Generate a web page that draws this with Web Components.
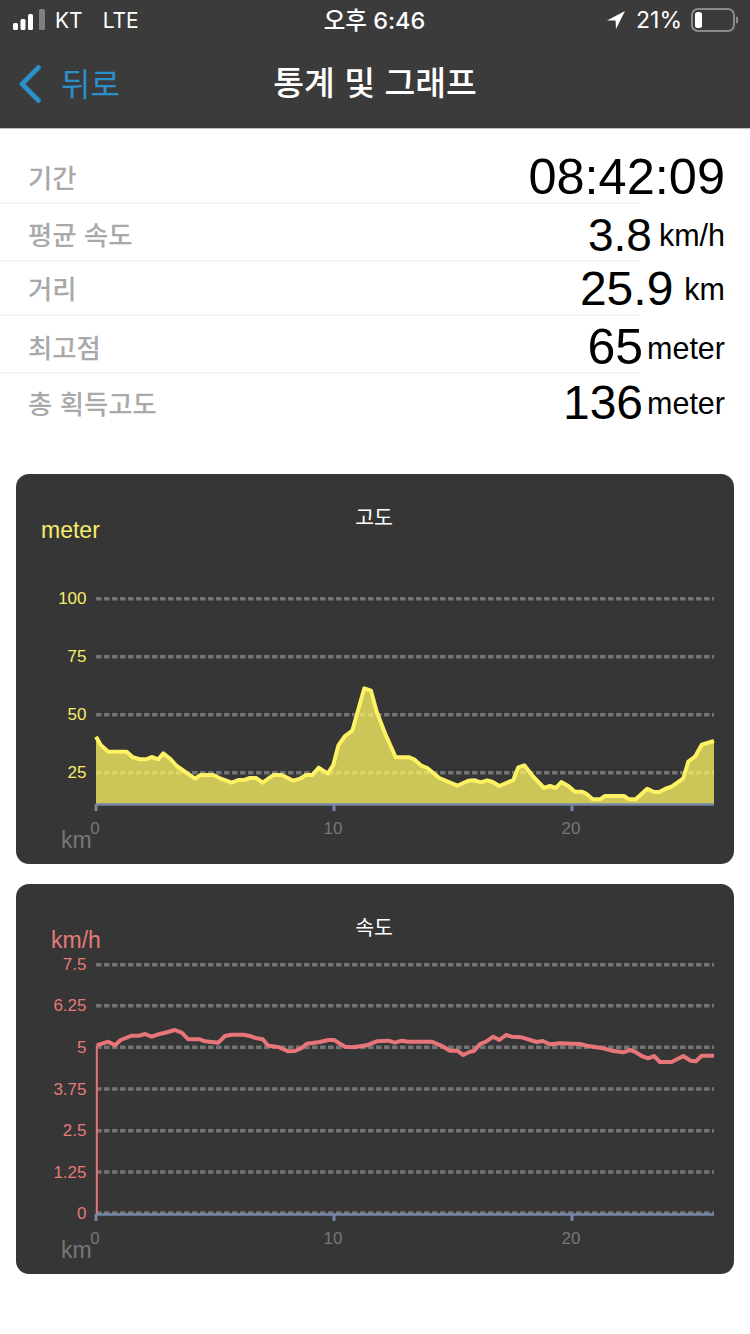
<!DOCTYPE html>
<html lang="ko">
<head>
<meta charset="utf-8">
<title>통계 및 그래프</title>
<style>
  html, body { margin: 0; background: #fff; }
  body { font-family: "Liberation Sans", "Noto Sans CJK KR", sans-serif; }
</style>
</head>
<body>
<status-bar></status-bar>
<nav-bar back="뒤로">통계 및 그래프</nav-bar>
<stat-list>
  <stat-row style="--l:2px;--v:3px;--size:50.5px"><span slot="label">기간</span>08:42:09</stat-row>
  <stat-row style="--l:1px;--v:3px;--gap:7px;--size:46px"><span slot="label">평균 속도</span>3.8<span slot="unit">km/h</span></stat-row>
  <stat-row style="--h:54px;--l:-1px;--v:1px;--gap:11px"><span slot="label">거리</span>25.9<span slot="unit">km</span></stat-row>
  <stat-row style="--l:2px;--v:3px;--gap:4px;--size:50px"><span slot="label">최고점</span>65<span slot="unit">meter</span></stat-row>
  <stat-row last style="--l:0px;--v:1px;--gap:4px"><span slot="label">총 획득고도</span>136<span slot="unit">meter</span></stat-row>
</stat-list>
<chart-card heading="고도" kind="altitude"></chart-card>
<chart-card heading="속도" kind="speed"></chart-card>

<script>
class StatusBar extends HTMLElement {
  constructor() {
    super();
    this.attachShadow({ mode: 'open' });
  }
  connectedCallback() {
    this.shadowRoot.innerHTML = `
    <style>
      :host { display: grid; grid-template-columns: 1fr auto 1fr; align-items: center; height: 40px; padding: 0 12px 0 13px; background: #3b3b3b; color: #fff; font: 400 21px Inter, "Noto Sans CJK KR", sans-serif; }
      .left, .right { display: flex; align-items: center; }
      .right { justify-content: flex-end; }
      .bars { margin-right: 9px; }
      .lte { margin-left: 20px; }
      .time { font-weight: 500; font-size: 23.5px; margin: 0 2px 2px 0; }
      .pct { margin: 0 9px 0 11px; font-size: 23px; }
    </style>
    <div class="left">
      <svg class="bars" width="33" height="22" viewBox="0 0 33 22">
        <rect x="0" y="14" width="5" height="7" rx="1.5" fill="#fff"/>
        <rect x="7.5" y="10" width="5" height="11" rx="1.5" fill="#fff"/>
        <rect x="15" y="5" width="5" height="16" rx="1.5" fill="#fff"/>
        <rect x="26" y="0" width="6" height="21" rx="1.5" fill="#808080"/>
      </svg>
      <span>KT</span><span class="lte">LTE</span>
    </div>
    <div class="time">오후 6:46</div>
    <div class="right">
      <svg width="18" height="18" viewBox="0 0 18 18"><path d="M18 0 L0 9.5 L8.6 9.6 L9 18 Z" fill="#fff"/></svg>
      <span class="pct">21%</span>
      <svg width="47" height="24" viewBox="0 0 47 24">
        <rect x="1" y="1" width="42" height="22" rx="6" fill="none" stroke="#8a8a8a" stroke-width="2"/>
        <rect x="4" y="4" width="7" height="16" rx="2.5" fill="#fff"/>
        <path d="M45 8.5 a3 3.5 0 0 1 0 7 Z" fill="#8a8a8a"/>
      </svg>
    </div>`;
  }
}
customElements.define('status-bar', StatusBar);

class NavBar extends HTMLElement {
  constructor() {
    super();
    this.attachShadow({ mode: 'open' });
  }
  connectedCallback() {
    this.shadowRoot.innerHTML = `
    <style>
      :host { display: grid; grid-template-columns: 1fr auto 1fr; align-items: center; height: 87px; padding: 0 19px 1px; background: #3b3b3b; border-bottom: 1px solid #bdbdbd; font-family: "Noto Sans CJK KR", sans-serif; }
      .back { display: flex; align-items: center; gap: 20px; color: #2b8fcb; font-size: 32px; line-height: 40px; }
      .back span { margin-bottom: 3px; }
      .title { color: #fff; font-size: 33.5px; font-weight: 500; line-height: 40px; margin-bottom: 6px; }
    </style>
    <div class="back">
      <svg width="22" height="38" viewBox="0 0 22 38"><path d="M19.5 2.5 L3 19 L19.5 35.5" fill="none" stroke="#2b8fcb" stroke-width="4.6" stroke-linecap="round" stroke-linejoin="round"/></svg>
      <span>${this.getAttribute('back')}</span>
    </div>
    <div class="title"><slot></slot></div>
    <div></div>`;
  }
}
customElements.define('nav-bar', NavBar);

class StatList extends HTMLElement {
  constructor() {
    super();
    this.attachShadow({ mode: 'open' });
    this.shadowRoot.innerHTML = `
    <style>
      :host { display: block; padding: 16px 0 43px; }
    </style>
    <slot></slot>`;
  }
}
customElements.define('stat-list', StatList);

class StatRow extends HTMLElement {
  constructor() {
    super();
    this.attachShadow({ mode: 'open' });
    this.shadowRoot.innerHTML = `
    <style>
      :host { display: block; }
      .row { display: flex; align-items: center; justify-content: space-between; height: var(--h, 58px); padding: 0 25px 0 28px; box-sizing: border-box; }
      .label { color: #a9a9a9; font: 500 26.4px "Noto Sans CJK KR", sans-serif; margin-top: calc(var(--l, 0px) * 2); }
      .value { display: block; white-space: nowrap; color: #000; font: 400 var(--size, 48px)/1 "Liberation Sans", sans-serif; margin-top: calc(var(--v, 0px) * 2); }
      .unit { font-size: 30.5px; margin-left: var(--gap, 0); vertical-align: 5px; }
      .sep { width: 640px; height: 2px; margin: -1px 0 -1px; background: #f5f5f5; }
      :host([last]) .sep { display: none; }
    </style>
    <div class="row">
      <span class="label"><slot name="label"></slot></span>
      <span class="value"><span><slot></slot></span><span class="unit"><slot name="unit"></slot></span></span>
    </div>
    <div class="sep"></div>`;
  }
}
customElements.define('stat-row', StatRow);

// points are [page x, page y] read off the reference
const ALT_POINTS = [[96,736.7],[100.7,745],[108.3,751.7],[126.7,751.7],[132.7,757.3],[140,759.3],[146,759.3],[151.7,757],[158.3,759.3],[163.3,753.3],[170,758.7],[176.7,766],[195,778.7],[200.7,775],[213.3,775],[220,778.3],[231.7,782.7],[238.3,780],[245,779.7],[250,778],[256,778],[262.7,782.7],[273.3,775],[281.7,775],[293.3,780.7],[300,778.7],[306,775],[312.3,775],[318.7,767.7],[327.7,773.7],[333.3,765],[338.3,745.7],[345,736],[352.3,730.7],[364.3,688.3],[371,690.7],[376.7,711.7],[385,733.3],[395.7,757.3],[409.3,757.3],[414,759.3],[420.7,765.3],[427.3,768],[439.3,778],[457.3,785.7],[468.3,780.7],[475,780.3],[480.7,782.3],[487.3,780.3],[492.7,782],[499.3,786],[513.3,780],[518.3,767.3],[524.3,765.3],[533.3,776.7],[544,788],[550,786],[555.7,788],[561.3,782],[568.3,786],[575,791.7],[581.7,791.7],[585.7,793.3],[592.7,799.3],[600,799.3],[605,796],[624,796],[629,799.3],[635.7,799.3],[647.3,788.7],[654,792],[659.3,792],[665,789],[671.7,786.7],[683.3,778.3],[688.3,761.7],[695,756.7],[701.7,744.7],[714,741]];
const SPD_POINTS = [[96.7,1045.3],[108.3,1041.7],[115,1045.3],[120.7,1040],[131.7,1035.7],[139.3,1035.7],[145,1034],[151.7,1036.7],[158.3,1034.3],[164,1033],[175,1030],[181.7,1032.7],[188.3,1039.3],[200,1039.3],[205,1041.3],[218.3,1042.7],[225,1036],[231.7,1034.7],[243.3,1034.7],[250,1036],[256.7,1038.3],[262.7,1039.3],[268.3,1045.7],[278.3,1047],[288.3,1051.3],[295,1051],[301.7,1048],[306.7,1043.7],[320,1042],[328.3,1040],[334,1040],[345,1046.7],[353.3,1047.3],[366.7,1045.3],[376.7,1041.3],[388.3,1040.7],[395,1042.7],[401.7,1040.7],[408.3,1041.7],[431.7,1041.7],[443.3,1046.7],[450,1050.7],[457.3,1050.7],[463.3,1055],[470,1051.7],[474,1051],[480,1044],[486,1041.7],[493.3,1036.7],[499.3,1040],[506,1035],[511.7,1036.7],[521.7,1037.3],[536.7,1042],[542.7,1041],[550,1044.3],[560,1043.3],[580,1044],[586.7,1045.7],[603.3,1048.3],[611.7,1050.7],[623.3,1052.3],[630,1050],[635,1051.7],[641.7,1056],[648.3,1058.3],[654,1056],[660,1062],[671.7,1062],[683.3,1056],[690.7,1060.7],[696,1061.3],[701.7,1055.7],[714,1055.7]];

const CHARTS = {
  altitude: {
    top: 474, color: '#f6ec6c', line: '#fdf164', base: 804,
    unit: 'meter', unitX: 41, unitY: 538, titleY: 525,
    grid: [['100',598.7],['75',656.7],['50',714.7],['25',772.7]],
    points: ALT_POINTS, fill: true, width: 4
  },
  speed: {
    top: 884, color: '#e57a78', line: '#e8757a', base: 1214,
    unit: 'km/h', unitX: 51, unitY: 948, titleY: 935,
    grid: [['7.5',964.7],['6.25',1005.7],['5',1047.3],['3.75',1089],['2.5',1130.7],['1.25',1172],['0',1213]],
    points: SPD_POINTS, fill: false, width: 4
  }
};

class ChartCard extends HTMLElement {
  constructor() {
    super();
    this.attachShadow({ mode: 'open' });
  }
  connectedCallback() {
    const c = CHARTS[this.getAttribute('kind')];
    const y = v => (v - c.top).toFixed(1);
    const x = v => (v - 16).toFixed(1);
    const line = c.points.map(p => x(p[0]) + ',' + y(p[1])).join(' ');
    const X0 = x(96), X1 = x(714);

    const grid = c.grid.map(g => `
      <line x1="${X0}" x2="${X1}" y1="${y(g[1])}" y2="${y(g[1])}" stroke="#747474" stroke-width="3.4" stroke-dasharray="5.6 2.4"/>
      <text x="${x(86.5)}" y="${(g[1] - c.top + 5.5).toFixed(1)}" text-anchor="end" fill="${c.color}" font-size="17">${g[0]}</text>`).join('');

    const ticks = [[96,'0',95],[334,'10',333],[572,'20',571]].map(t => `
      <line x1="${x(t[0])}" x2="${x(t[0])}" y1="${y(c.base)}" y2="${y(c.base + 7)}" stroke="#7686a6" stroke-width="3"/>
      <text x="${x(t[2])}" y="${y(c.base + 30)}" text-anchor="middle" fill="#777" font-size="17">${t[1]}</text>`).join('');

    let plot;
    if (c.fill) {
      plot = `<polygon points="${X0},${y(c.base)} ${line} ${X1},${y(c.base)}" fill="rgb(255,245,99)" fill-opacity="0.75"/>
        <polyline points="${line}" fill="none" stroke="${c.line}" stroke-width="${c.width}" stroke-linejoin="round"/>`;
    } else {
      plot = `<line x1="${x(96.8)}" x2="${x(96.8)}" y1="${y(1046)}" y2="${y(c.base)}" stroke="${c.line}" stroke-width="2"/>
        <polyline points="${line}" fill="none" stroke="${c.line}" stroke-width="${c.width}" stroke-linejoin="round"/>`;
    }

    this.shadowRoot.innerHTML = `
    <style>
      :host { display: block; height: 390px; margin: 0 16px 20px; background: #363636; border-radius: 13px; overflow: hidden; }
      svg { display: block; font-family: "Liberation Sans", "Noto Sans CJK KR", sans-serif; }
    </style>
    <svg width="718" height="390" viewBox="0 0 718 390">
      <text x="${x(374)}" y="${y(c.titleY)}" text-anchor="middle" fill="#fff" font-size="20.5" font-family="Noto Sans CJK KR">${this.getAttribute('heading')}</text>
      <text x="${x(c.unitX)}" y="${y(c.unitY)}" fill="${c.color}" font-size="23">${c.unit}</text>
      <text x="${x(61)}" y="${y(c.base + 44)}" fill="#777" font-size="23">km</text>
      ${grid}
      ${plot}
      <line x1="${X0}" x2="${X1}" y1="${y(c.base + 0.5)}" y2="${y(c.base + 0.5)}" stroke="#7686a6" stroke-width="2.6"/>
      ${ticks}
    </svg>`;
  }
}
customElements.define('chart-card', ChartCard);
</script>
</body>
</html>
